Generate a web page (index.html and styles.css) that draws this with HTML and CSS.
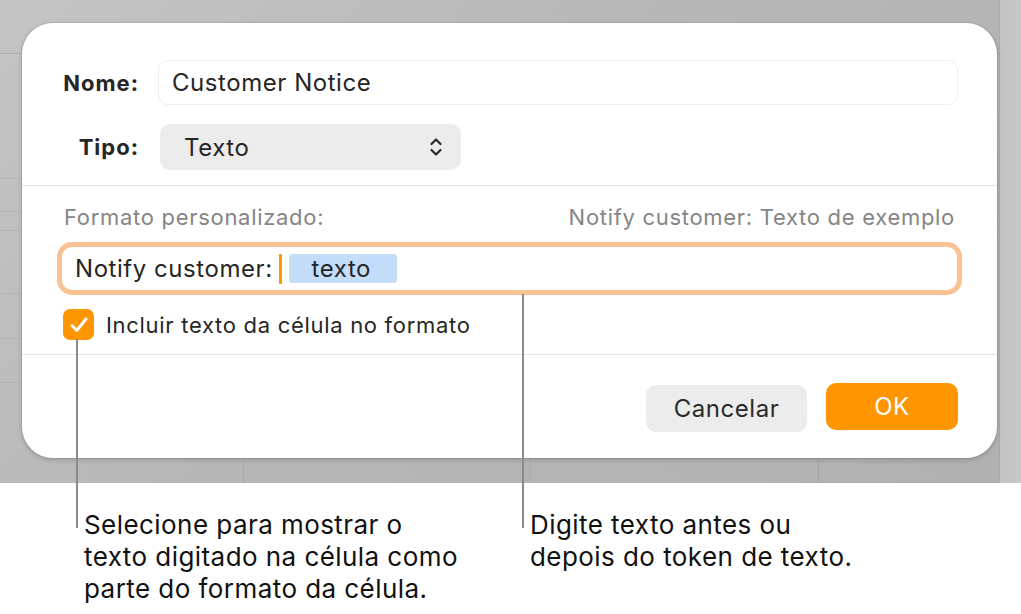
FILE: index.html
```html
<!DOCTYPE html>
<html lang="pt">
<head>
<meta charset="utf-8">
<title>Formato personalizado</title>
<link rel="stylesheet" href="styles.css">
</head>
<body>
<div class="page">
  <div class="backdrop">
    <div class="dialog">
      <div class="top">
        <div class="row">
          <div class="label">Nome:</div>
          <div class="field">Customer Notice</div>
        </div>
        <div class="row">
          <div class="label">Tipo:</div>
          <div class="popup">
            <span>Texto</span>
            <svg class="chev" width="14" height="20" viewBox="0 0 14 20"><path d="M2.5 7 L7 2.5 L11.5 7 M2.5 13 L7 17.5 L11.5 13" fill="none" stroke="#2a2a2a" stroke-width="2.2" stroke-linecap="round" stroke-linejoin="round"/></svg>
          </div>
        </div>
      </div>
      <div class="middle">
        <div class="hint-row">
          <span>Formato personalizado:</span>
          <span>Notify customer: Texto de exemplo</span>
        </div>
        <div class="token-field">
          <span class="prefix">Notify customer:</span>
          <span class="caret"></span>
          <span class="token">texto</span>
        </div>
        <div class="check-row">
          <span class="checkbox"><svg width="22" height="20" viewBox="0 0 22 20"><path d="M4 10.5 L8.8 15.5 L18 4" fill="none" stroke="#fff" stroke-width="3" stroke-linecap="round" stroke-linejoin="round"/></svg></span>
          <span>Incluir texto da célula no formato</span>
        </div>
      </div>
      <div class="buttons">
        <button class="btn cancel">Cancelar</button>
        <button class="btn ok">OK</button>
      </div>
    </div>
    <div class="strip"></div>
  </div>
  <div class="callouts">
    <p class="note left">Selecione para mostrar o<br>texto digitado na célula como<br>parte do formato da célula.</p>
    <p class="note right">Digite texto antes ou<br>depois do token de texto.</p>
  </div>
  <div class="leader leader-left"></div>
  <div class="leader leader-right"></div>
</div>
</body>
</html>
```

FILE: styles.css
```css
* { box-sizing: border-box; }
html, body { margin: 0; padding: 0; background: #fff; }
body {
  font-family: Inter, "Helvetica Neue", Arial, sans-serif;
  color: #262626;
  -webkit-font-smoothing: antialiased;
}
.page {
  position: relative;
  width: 1021px;
  height: 614px;
  overflow: hidden;
}
.backdrop {
  display: flex;
  height: 483px;
  padding: 23px 0 0 22px;
  background:
    linear-gradient(rgba(0,0,0,0.10), rgba(0,0,0,0.10)) 0 53px / 100% 1px no-repeat,
    linear-gradient(rgba(0,0,0,0.06), rgba(0,0,0,0.06)) 0 178px / 100% 1px no-repeat,
    linear-gradient(rgba(0,0,0,0.06), rgba(0,0,0,0.06)) 0 211px / 100% 1px no-repeat,
    linear-gradient(rgba(0,0,0,0.06), rgba(0,0,0,0.06)) 0 230px / 100% 1px no-repeat,
    linear-gradient(rgba(0,0,0,0.06), rgba(0,0,0,0.06)) 0 293px / 100% 1px no-repeat,
    linear-gradient(rgba(0,0,0,0.06), rgba(0,0,0,0.06)) 0 338px / 100% 1px no-repeat,
    linear-gradient(rgba(0,0,0,0.06), rgba(0,0,0,0.06)) 0 382px / 100% 1px no-repeat,
    linear-gradient(rgba(0,0,0,0.07), rgba(0,0,0,0.07)) 243px 458px / 1px 25px no-repeat,
    linear-gradient(rgba(0,0,0,0.05), rgba(0,0,0,0.05)) 530px 458px / 1px 25px no-repeat,
    linear-gradient(rgba(0,0,0,0.07), rgba(0,0,0,0.07)) 818px 458px / 1px 25px no-repeat,
    linear-gradient(135deg, #c4c4c4 0%, #b7b7b7 45%, #b1b1b1 100%);
}
.dialog {
  width: 975px;
  height: 435px;
  background: #fff;
  border-radius: 31px;
  box-shadow: 0 0 0 1px rgba(0,0,0,0.06), 0 2px 5px rgba(0,0,0,0.18);
  display: flex;
  flex-direction: column;
  position: relative;
  z-index: 1;
}
.strip {
  margin-left: 3px;
  flex: 1;
  margin-top: -23px;
  height: 483px;
  background: linear-gradient(90deg, #c3c3c3, #c8c8c8);
  box-shadow: -1px 0 0 rgba(0,0,0,0.05);
}
.top {
  display: flex;
  flex-direction: column;
  gap: 19px;
  padding: 37px 39px 15px 0;
  border-bottom: 1.5px solid #e3e3e3;
}
.row {
  display: flex;
  align-items: center;
}
.label {
  width: 117px;
  text-align: right;
  font-weight: 700;
  font-size: 22px;
  letter-spacing: 1px;
  color: #262626;
  margin-right: 19px;
}
.field {
  flex: 1;
  height: 45px;
  border: 1.5px solid #efefef;
  border-radius: 10px;
  padding-left: 13px;
  display: flex;
  align-items: center;
  font-size: 24px;
  letter-spacing: 0.55px;
  color: #262626;
}
.popup {
  margin-left: 2px;
  width: 301px;
  height: 46px;
  border-radius: 10px;
  background: #ececec;
  display: flex;
  align-items: center;
  justify-content: space-between;
  padding: 0 18px 0 24px;
  font-size: 24px;
  letter-spacing: 0.55px;
  color: #262626;
}
.middle {
  flex: 0 0 auto;
  padding: 17px 35px 14px 35px;
  border-bottom: 1.5px solid #e3e3e3;
}
.hint-row {
  display: flex;
  justify-content: space-between;
  padding: 0 7px;
  font-size: 22px;
  letter-spacing: 0.7px;
  color: #858585;
  height: 27px;
  align-items: center;
}
.token-field {
  margin-top: 12px;
  height: 53px;
  border: 5px solid #f8c292;
  border-radius: 15px;
  display: flex;
  align-items: center;
  padding-left: 13px;
  font-size: 24px;
  letter-spacing: 0.55px;
  color: #262626;
}
.caret {
  width: 3px;
  height: 30px;
  background: #ff9500;
  margin-left: 6px;
  margin-right: 7px;
  border-radius: 1px;
}
.token {
  background: #c3ddfb;
  border-radius: 3px;
  height: 29px;
  width: 108px;
  padding-left: 23px;
  display: flex;
  align-items: center;
}
.check-row {
  margin-top: 14px;
  display: flex;
  align-items: center;
  padding-left: 6px;
  font-size: 22px;
  letter-spacing: 0.7px;
  color: #262626;
  gap: 12px;
}
.checkbox {
  width: 31px;
  height: 31px;
  border-radius: 7px;
  background: #ff9500;
  display: flex;
  align-items: center;
  justify-content: center;
}
.buttons {
  display: flex;
  justify-content: flex-end;
  align-items: flex-start;
  gap: 19px;
  padding: 28px 39px 0 0;
}
.btn {
  font-family: inherit;
  font-size: 24px;
  letter-spacing: 0.55px;
  border: none;
  border-radius: 10px;
  height: 47px;
}
.cancel {
  margin-top: 2px;
  width: 161px;
  background: #ececec;
  color: #2a2a2a;
}
.ok {
  width: 132px;
  background: #ff9500;
  color: #fff;
}
.callouts {
  display: flex;
  padding-top: 26px;
}
.note {
  margin: 0;
  font-size: 26px;
  letter-spacing: 0.44px;
  line-height: 32px;
  color: #111;
}
.note.left { padding-left: 84px; width: 530px; }
.note.right { padding-left: 0; }
.leader {
  position: absolute;
  width: 2px;
  background: #8a8a8a;
  z-index: 2;
}
.leader-left { left: 76px; top: 339px; height: 189px; }
.leader-right { left: 522px; top: 294px; height: 234px; }
```
